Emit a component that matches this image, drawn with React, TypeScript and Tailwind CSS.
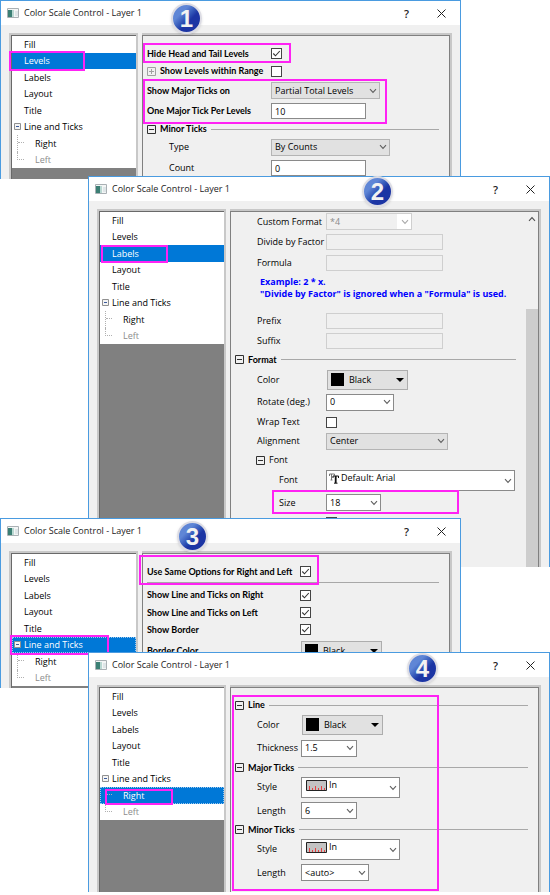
import { useId, type ReactNode } from "react";

const NODES = ["Fill", "Levels", "Labels", "Layout", "Title", "Line and Ticks", "Right", "Left"];

const STRONG = "font-['Lato',sans-serif] font-bold";

const Chevron = ({ className = "" }: { className?: string }) => (
  <svg viewBox="0 0 8 6" className={`pointer-events-none absolute h-[6px] w-[8px] ${className}`} fill="none" stroke="currentColor" strokeWidth="1.1">
    <path d="M1 1.2 4 4.4 7 1.2" />
  </svg>
);

const Expander = ({ open = true, faint = false }: { open?: boolean; faint?: boolean }) => (
  <svg viewBox="0 0 9 9" className={`h-[9px] w-[9px] shrink-0 ${faint ? "text-[#a0a0a0]" : "text-[#303030]"}`} fill="none" stroke="currentColor">
    <path d="M.5 .5h8v8h-8zM2 4.5h5" />
    {!open && <path d="M4.5 2v5" />}
  </svg>
);

const TickStyle = () => (
  <svg viewBox="0 0 21 11" className="h-[11px] w-[21px]">
    <path d="M.5 .5h20v10H.5z" fill="#c3c3c3" stroke="#222" />
    <path d="M3.5 6v4M6.5 8v2M9.5 6v4M12.5 8v2M15.5 6v4M18.5 8v2" stroke="#f02020" strokeWidth=".8" />
  </svg>
);

const FontGlyph = () => (
  <svg viewBox="0 0 10 11" className="h-[11px] w-[10px]" fill="none">
    <path d="M.5 3V1h5v1.500M2.500 1v6M1.500 7h2" stroke="#777" />
    <path d="M4 5V3h5.500v2" stroke="#111" />
    <path d="M6.700 3v7" stroke="#111" strokeWidth="1.800" />
    <path d="M5 10.200h3.500" stroke="#111" />
  </svg>
);

const Swatch = () => <span className="block h-[13px] w-[13px] bg-black" />;

type RowProps = {
  label: string;
  height: string;
  labelClass?: string;
  strong?: boolean;
  before?: ReactNode;
  children: (id: string) => ReactNode;
};

const Row = ({ label, height, labelClass = "", strong = false, before, children }: RowProps) => {
  const id = useId();
  return (
    <div className={`flex items-center ${height}`}>
      <label htmlFor={id} className={`flex shrink-0 items-center gap-1 whitespace-nowrap ${labelClass} ${strong ? STRONG : ""}`}>
        {before}
        {label}
      </label>
      {children(id)}
    </div>
  );
};

const Group = ({ title, height }: { title: string; height: string }) => (
  <div className={`flex items-center gap-1 pl-1 pr-[10px] ${height}`}>
    <Expander />
    <span className={STRONG}>{title}</span>
    <span className="h-px flex-1 bg-[#a8a8a8]" />
  </div>
);

const Check = ({ id, checked = false }: { id: string; checked?: boolean }) => (
  <span className="relative h-[11px] w-[11px] shrink-0">
    <input id={id} type="checkbox" defaultChecked={checked} className="peer block h-[11px] w-[11px] appearance-none border border-[#444] bg-white" />
    <svg viewBox="0 0 11 11" className="pointer-events-none absolute inset-0 hidden text-[#333] peer-checked:block" fill="none" stroke="currentColor" strokeWidth="1.1">
      <path d="M2.3 5.5 4.5 7.8 8.8 3" />
    </svg>
  </span>
);

const TextBox = ({ id, value = "", size, disabled = false }: { id: string; value?: string; size: string; disabled?: boolean }) => (
  <input
    id={id}
    type="text"
    defaultValue={value}
    disabled={disabled}
    className={`h-4 border px-[3px] ${size} ${disabled ? "border-[#cfcfcf] bg-[#f0f0f0]" : "border-[#8a8a8a] bg-white"}`}
  />
);

type DropdownProps = {
  id: string;
  value: string;
  size: string;
  tone?: "flat" | "edit" | "off";
};

const TONES = {
  flat: "border-[#b4b4b4] bg-[#e1e1e1]",
  edit: "border-[#8a8a8a] bg-white",
  off: "border-[#cfcfcf] bg-[#f0f0f0] text-[#8a8a8a]",
};

const Dropdown = ({ id, value, size, tone = "flat" }: DropdownProps) => (
  <span className={`relative shrink-0 ${size}`}>
    <select id={id} disabled={tone === "off"} className={`block h-full w-full appearance-none border pl-[3px] opacity-100 ${TONES[tone]}`}>
      <option>{value}</option>
    </select>
    {tone === "off" && <span className="absolute inset-y-px right-px w-[14px] bg-white" />}
    <Chevron className={`right-[3px] top-1/2 -mt-[3px] ${tone === "off" ? "text-[#aaa]" : "text-[#606060]"}`} />
  </span>
);

const ColorPicker = ({ id }: { id: string }) => (
  <span className="relative ml-px h-5 w-[81px] shrink-0">
    <select id={id} className="block h-full w-full appearance-none border border-[#adadad] bg-[#e1e1e1] pl-[21px]">
      <option>Black</option>
    </select>
    <span className="pointer-events-none absolute left-1 top-[3px]">
      <Swatch />
    </span>
    <svg viewBox="0 0 8 4" className="pointer-events-none absolute right-[4px] top-2 h-1 w-2">
      <path d="M0 0h8L4 4z" />
    </svg>
  </span>
);

type IconSelectProps = { id: string; value: string; size: string; icon: ReactNode; iconClass: string; pad: string };

const IconSelect = ({ id, value, size, icon, iconClass, pad }: IconSelectProps) => (
  <span className={`relative h-[21px] shrink-0 ${size}`}>
    <select id={id} className={`block h-full w-full appearance-none border border-[#8a8a8a] bg-white pb-1 ${pad}`}>
      <option>{value}</option>
    </select>
    <span className={`pointer-events-none absolute top-[3px] ${iconClass}`}>{icon}</span>
    <Chevron className="right-[3px] top-2 text-[#606060]" />
  </span>
);

const Tree = ({ selected, dotted = false }: { selected: string; dotted?: boolean }) => (
  <nav className="w-[129px] shrink-0 border-l-2 border-r-2 border-t-2 border-[#c8c8c8]">
    <div className="h-full border-l border-t border-[#696969] bg-[#808080]">
      <ul className="flex h-[132px] flex-col bg-white">
        {NODES.map((node) => {
          const active = node === selected;
          const child = node === "Right" || node === "Left";
          return (
            <li key={node} className="flex min-h-0 flex-1">
              <button
                type="button"
                className={`flex w-full items-center whitespace-nowrap text-left leading-none ${
                  active ? "bg-[#0078d7] text-white" : node === "Left" ? "text-[#8c8c8c]" : "text-black"
                } ${active && dotted ? "outline-1 -outline-offset-1 outline-dotted outline-[#9cc9ee]" : ""}`}
              >
                <span className={child ? "flex w-[23px] shrink-0 self-stretch pl-[5px]" : "flex w-[12px] shrink-0 pl-[2px]"}>
                  {node === "Line and Ticks" && (
                    <svg viewBox="0 0 7 7" className="h-[7px] w-[7px]" fill="#f4f4f4" stroke="#909090">
                      <path d="M.5 .5h6v6h-6z" />
                      <path d="M2 3.5h3" stroke="#3b5a9a" />
                    </svg>
                  )}
                  {child && (
                    <span className={`w-[7px] border-l border-dotted border-[#b0b0b0] ${node === "Left" ? "h-1/2 border-b" : "h-full"}`}>
                      {node === "Right" && <span className="block h-1/2 border-b border-dotted border-[#b0b0b0]" />}
                    </span>
                  )}
                </span>
                {node}
              </button>
            </li>
          );
        })}
      </ul>
    </div>
  </nav>
);

const Mark = ({ className }: { className: string }) => (
  <span className={`pointer-events-none absolute border-2 border-[#ff22f4] ${className}`} />
);

const Step = ({ n, className }: { n: number; className: string }) => (
  <span
    className={`absolute flex h-[31px] w-[31px] items-center justify-center rounded-full border-2 border-[#dcdce4] bg-linear-to-br from-[#5f86d6] from-30% to-[#1c35a4] to-60% font-['Liberation_Sans',sans-serif] text-[24px] font-bold leading-none text-[#f2f2f2] shadow ${className}`}
  >
    {n}
  </span>
);

type DialogProps = {
  className: string;
  selected: string;
  dotted?: boolean;
  panelClass?: string;
  scrollbar?: boolean;
  marks: ReactNode;
  children: ReactNode;
};

const Dialog = ({ className, selected, dotted, panelClass = "", scrollbar = false, marks, children }: DialogProps) => (
  <section className={`relative border-x border-t border-[#4a9be0] bg-[#f0f0f0] ${className}`}>
    <header className="flex h-6 items-center bg-white pl-[6px] pr-[14px]">
      <svg viewBox="0 0 12 10" className="mr-[5px] h-[10px] w-3">
        <path d="M.5 .5h11v9H.5z" fill="#f4f6f6" stroke="#a9b0b4" />
        <path d="M1 2h4v7H1z" fill="#3b7f74" />
        <path d="M5 2h2v7H5z" fill="#b9d8d2" />
        <path d="M8 3h3v5H8z" fill="#dfe6e8" />
      </svg>
      <h2 className="flex-1 whitespace-nowrap text-[#222]">Color Scale Control - Layer 1</h2>
      <button type="button" aria-label="Help" className="mr-[28px] text-[11px] font-semibold leading-none text-[#222]">
        ?
      </button>
      <button type="button" aria-label="Close">
        <svg viewBox="0 0 9 9" className="h-[9px] w-[9px]" stroke="#222">
          <path d="M.5 .5l8 8M8.500 .5l-8 8" />
        </svg>
      </button>
    </header>
    <div className="flex gap-1 px-2 pt-2">
      <Tree selected={selected} dotted={dotted} />
      <div className="flex min-w-0 flex-1 border-r-2 border-t-2 border-[#c8c8c8]">
        <div className="flex min-w-0 flex-1 border-l border-r border-t border-[#808080]">
          <div className={`min-w-0 flex-1 ${panelClass}`}>{children}</div>
          {scrollbar && (
            <div className="w-3 shrink-0 bg-[#f0f0f0]">
              <div className="relative flex h-[97px] justify-center text-[#505050]">
                <Chevron className="top-1 rotate-180" />
              </div>
              <div className="h-[258px] bg-[#cdcdcd]" />
            </div>
          )}
        </div>
      </div>
    </div>
    {marks}
  </section>
);

const App = () => {
  return (
    <main className="bg-white font-['Open_Sans',sans-serif] text-[9px] leading-3 text-black">
      {/* Levels */}
      <Dialog
        className="mr-[89px]"
        selected="Levels"
        panelClass="pt-[9px]"
        marks={
          <>
            <Mark className="left-2 top-[50px] h-5 w-[76px]" />
            <Mark className="left-[142px] top-[42px] h-5 w-[148px]" />
            <Mark className="left-[142px] top-[78px] h-[45px] w-[244px]" />
            <Step n={1} className="left-[170px] top-[2px]" />
          </>
        }
      >
        <Row strong label="Hide Head and Tail Levels" height="h-[17px]" labelClass="w-[128px] pl-1">
          {(id) => <Check id={id} checked />}
        </Row>
        <Row strong label="Show Levels within Range" height="h-[18px]" labelClass="w-[128px] pl-1" before={<Expander open={false} faint />}>
          {(id) => <Check id={id} />}
        </Row>
        <Row strong label="Show Major Ticks on" height="h-[21px]" labelClass="w-[128px] pl-1">
          {(id) => <Dropdown id={id} value="Partial Total Levels" size="h-[17px] w-[109px]" />}
        </Row>
        <Row strong label="One Major Tick Per Levels" height="h-5" labelClass="w-[128px] pl-1">
          {(id) => <TextBox id={id} value="10" size="w-[95px]" />}
        </Row>
        <Group title="Minor Ticks" height="h-4" />
        <Row label="Type" height="h-5" labelClass="w-[128px] pl-[26px]">
          {(id) => <Dropdown id={id} value="By Counts" size="h-[17px] w-[119px]" />}
        </Row>
        <Row label="Count" height="h-[22px]" labelClass="w-[128px] pl-[26px]">
          {(id) => <TextBox id={id} value="0" size="w-[95px]" />}
        </Row>
      </Dialog>

      {/* Labels */}
      <Dialog
        className="-mt-[3px] ml-[88px]"
        selected="Labels"
        scrollbar
        marks={
          <>
            <Mark className="left-3 top-[68px] h-[18px] w-[67px]" />
            <Mark className="left-[183px] top-[313px] h-6 w-[187px]" />
            <Step n={2} className="left-[273px] -top-px" />
          </>
        }
      >
        <Row label="Custom Format" height="h-[19px]" labelClass="w-[95px] pl-[26px]">
          {(id) => <Dropdown id={id} value="*4" size="h-[17px] w-[86px]" tone="off" />}
        </Row>
        <Row label="Divide by Factor" height="h-[22px]" labelClass="w-[95px] pl-[26px]">
          {(id) => <TextBox id={id} size="w-[117px]" disabled />}
        </Row>
        <Row label="Formula" height="h-5" labelClass="w-[95px] pl-[26px]">
          {(id) => <TextBox id={id} size="w-[117px]" disabled />}
        </Row>
        <p className="whitespace-nowrap pb-[10px] pl-[29px] pt-[3px] font-bold text-[#0000ff]">
          Example: 2 * x.
          <br />
          "Divide by Factor" is ignored when a "Formula" is used.
        </p>
        <Row label="Prefix" height="h-[21px]" labelClass="w-[95px] pl-[26px]">
          {(id) => <TextBox id={id} size="w-[117px]" disabled />}
        </Row>
        <Row label="Suffix" height="h-5" labelClass="w-[95px] pl-[26px]">
          {(id) => <TextBox id={id} size="w-[117px]" disabled />}
        </Row>
        <Group title="Format" height="h-[17px]" />
        <Row label="Color" height="h-[23px]" labelClass="w-[95px] pl-[26px]">
          {(id) => <ColorPicker id={id} />}
        </Row>
        <Row label="Rotate (deg.)" height="h-[22px]" labelClass="w-[95px] pl-[26px]">
          {(id) => <Dropdown id={id} value="0" size="h-[17px] w-[68px]" tone="edit" />}
        </Row>
        <Row label="Wrap Text" height="h-[18px]" labelClass="w-[95px] pl-[26px]">
          {(id) => <Check id={id} />}
        </Row>
        <Row label="Alignment" height="h-5" labelClass="w-[95px] pl-[26px]">
          {(id) => <Dropdown id={id} value="Center" size="h-[17px] w-[122px]" />}
        </Row>
        <div className="flex h-[18px] items-center gap-1 pl-[25px]">
          <Expander />
          Font
        </div>
        <Row label="Font" height="h-[22px]" labelClass="w-[95px] pl-[48px]">
          {(id) => <IconSelect id={id} value="Default: Arial" size="w-[189px]" icon={<FontGlyph />} iconClass="left-[3px]" pad="pl-[14px]" />}
        </Row>
        <Row label="Size" height="h-[23px]" labelClass="w-[95px] pl-[48px]">
          {(id) => <Dropdown id={id} value="18" size="h-[17px] w-[55px]" tone="edit" />}
        </Row>
        <div className="flex h-4 items-center pl-[95px]">
          <input type="checkbox" aria-label="Bold" className="h-[11px] w-[11px] appearance-none border border-[#444] bg-white" />
        </div>
      </Dialog>

      {/* Line and Ticks */}
      <Dialog
        className="-mt-[49px] mr-[89px]"
        selected="Line and Ticks"
        dotted
        panelClass="pb-6 pt-2"
        marks={
          <>
            <Mark className="left-[9px] top-[116px] h-5 w-[99px]" />
            <Mark className="left-[138px] top-[36px] h-[30px] w-[180px]" />
            <Step n={3} className="left-[176px] top-[2px]" />
          </>
        }
      >
        <Row strong label="Use Same Options for Right and Left" height="h-[19px]" labelClass="w-[157px] pl-1">
          {(id) => <Check id={id} checked />}
        </Row>
        <hr className="mb-[3px] ml-1 mr-[10px] mt-px border-[#a8a8a8]" />
        <Row strong label="Show Line and Ticks on Right" height="h-[18px]" labelClass="w-[157px] pl-1">
          {(id) => <Check id={id} checked />}
        </Row>
        <Row strong label="Show Line and Ticks on Left" height="h-[17px]" labelClass="w-[157px] pl-1">
          {(id) => <Check id={id} checked />}
        </Row>
        <Row strong label="Show Border" height="h-[17px]" labelClass="w-[157px] pl-1">
          {(id) => <Check id={id} checked />}
        </Row>
        <Row strong label="Border Color" height="h-[26px]" labelClass="w-[157px] pl-1">
          {(id) => <ColorPicker id={id} />}
        </Row>
      </Dialog>

      {/* Right */}
      <Dialog
        className="-mt-[36px] ml-[88px]"
        selected="Right"
        dotted
        panelClass="pb-2 pt-2"
        marks={
          <>
            <Mark className="left-4 top-[136px] h-4 w-[68px]" />
            <Mark className="left-[143px] top-[42px] h-[196px] w-[207px]" />
            <Step n={4} className="left-[318px] top-0" />
          </>
        }
      >
        <Group title="Line" height="h-[18px]" />
        <Row label="Color" height="h-[22px]" labelClass="w-[70px] pl-[26px]">
          {(id) => <ColorPicker id={id} />}
        </Row>
        <Row label="Thickness" height="h-6" labelClass="w-[70px] pl-[26px]">
          {(id) => <Dropdown id={id} value="1.5" size="h-[17px] w-[56px]" tone="edit" />}
        </Row>
        <Group title="Major Ticks" height="h-[15px]" />
        <Row label="Style" height="h-6" labelClass="w-[70px] pl-[26px]">
          {(id) => <IconSelect id={id} value="In" size="w-[99px]" icon={<TickStyle />} iconClass="left-[5px]" pad="pl-[27px]" />}
        </Row>
        <Row label="Length" height="h-[23px]" labelClass="w-[70px] pl-[26px]">
          {(id) => <Dropdown id={id} value="6" size="h-[17px] w-[56px]" tone="edit" />}
        </Row>
        <Group title="Minor Ticks" height="h-[15px]" />
        <Row label="Style" height="h-6" labelClass="w-[70px] pl-[26px]">
          {(id) => <IconSelect id={id} value="In" size="w-[99px]" icon={<TickStyle />} iconClass="left-[5px]" pad="pl-[27px]" />}
        </Row>
        <Row label="Length" height="h-[23px]" labelClass="w-[70px] pl-[26px]">
          {(id) => <Dropdown id={id} value="<auto>" size="h-[17px] w-[68px]" tone="edit" />}
        </Row>
      </Dialog>
    </main>
  );
};

export default App;
